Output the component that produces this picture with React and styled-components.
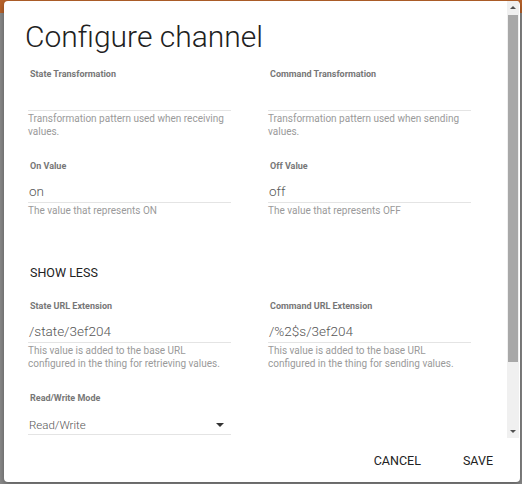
import React from 'react';
import styled, { createGlobalStyle } from 'styled-components';

const GlobalStyle = createGlobalStyle`
  html, body {
    margin: 0;
    padding: 0;
    background: #8a8a8a;
  }
  * {
    box-sizing: border-box;
  }
`;

const Backdrop = styled.div`
  width: 522px;
  height: 484px;
  padding: 1px 2px 2px 4px;
  background: linear-gradient(#b9632b 0, #b9632b 13px, #8a8a8a 13px);
  font-family: Roboto, 'Liberation Sans', sans-serif;
  overflow: hidden;
`;

const Dialog = styled.div`
  width: 516px;
  height: 481px;
  background: #fff;
  border-radius: 4px;
  box-shadow: 0 2px 6px rgba(0, 0, 0, 0.35);
  display: flex;
  flex-direction: column;
  overflow: hidden;
`;

const Body = styled.div`
  height: 437px;
  display: flex;
`;

const Content = styled.div`
  flex: 1;
  overflow: hidden;
  padding: 16px 0 0 24px;
`;

const Title = styled.h2`
  margin: 0 0 11px -3px;
  font-size: 30px;
  line-height: 39px;
  font-weight: 300;
  color: #212121;
`;

const Grid = styled.div`
  display: grid;
  grid-template-columns: 203px 203px;
  column-gap: 37px;
  row-gap: 21px;
`;

const Field = styled.div`
  display: flex;
  flex-direction: column;
`;

const Label = styled.label`
  font-size: 9px;
  line-height: 14px;
  font-weight: 700;
  color: #777;
  padding-left: 2px;
`;

const InputBox = styled.div`
  height: 30px;
  padding-top: ${({ $select }) => ($select ? '10px' : '7.5px')};
  border-bottom: 1px solid #e4e4e4;
  display: flex;
  align-items: flex-start;
  justify-content: space-between;
`;

const Value = styled.span`
  font-size: ${({ $select }) => ($select ? '11.5px' : '13.5px')};
  line-height: 20px;
  font-weight: 300;
  color: #555;
  padding-left: 1px;
`;

const Caret = styled.span`
  width: 0;
  height: 0;
  margin: 8px 7px 0 0;
  border-left: 4px solid transparent;
  border-right: 4px solid transparent;
  border-top: 4px solid #333;
`;

const Helper = styled.div`
  margin-top: 1px;
  font-size: 10px;
  line-height: 13px;
  color: #9a9a9a;
`;

const ShowLess = styled.div`
  grid-column: 1 / span 2;
  margin: 27px 0 -3px 2px;
  font-size: 12.5px;
  line-height: 16px;
  font-weight: 400;
  color: #222;
`;

const Scrollbar = styled.div`
  width: 12px;
  margin-right: 1px;
  background: #f0f0f0;
  display: flex;
  flex-direction: column;
`;

const ScrollButton = styled.div`
  height: 13px;
  display: flex;
  align-items: center;
  justify-content: center;

  &::after {
    content: '';
    border-left: 3px solid transparent;
    border-right: 3px solid transparent;
    ${({ $down }) => ($down ? 'border-top: 3px solid #505050;' : 'border-bottom: 3px solid #505050;')}
  }
`;

const Thumb = styled.div`
  height: 347px;
  margin: 1px 1px 0;
  background: #a8a8a8;
`;

const Track = styled.div`
  flex: 1;
`;

const Footer = styled.div`
  height: 44px;
  display: flex;
  align-items: center;
  justify-content: flex-end;
  gap: 10px;
  padding-right: 11px;
`;

const Button = styled.button`
  border: none;
  background: none;
  padding: 8px 16px;
  font-family: Roboto, 'Liberation Sans', sans-serif;
  font-size: 12.5px;
  font-weight: 400;
  color: #222;
`;

const fields = [
  { label: 'State Transformation', value: '', help: 'Transformation pattern used when receiving values.' },
  { label: 'Command Transformation', value: '', help: 'Transformation pattern used when sending values.' },
  { label: 'On Value', value: 'on', help: 'The value that represents ON' },
  { label: 'Off Value', value: 'off', help: 'The value that represents OFF' },
];

const extraFields = [
  { label: 'State URL Extension', value: '/state/3ef204', help: 'This value is added to the base URL configured in the thing for retrieving values.' },
  { label: 'Command URL Extension', value: '/%2$s/3ef204', help: 'This value is added to the base URL configured in the thing for sending values.' },
  { label: 'Read/Write Mode', value: 'Read/Write', select: true },
];

const renderField = (f) => (
  <Field key={f.label}>
    <Label>{f.label}</Label>
    <InputBox $select={f.select}>
      <Value $select={f.select}>{f.value}</Value>
      {f.select && <Caret />}
    </InputBox>
    {f.help && <Helper>{f.help}</Helper>}
  </Field>
);

const App = () => (
  <>
    <GlobalStyle />
    <Backdrop>
      <Dialog>
        <Body>
          <Content>
            <Title>Configure channel</Title>
            <Grid>
              {fields.map(renderField)}
              <ShowLess>SHOW LESS</ShowLess>
              {extraFields.map(renderField)}
            </Grid>
          </Content>
          <Scrollbar>
            <ScrollButton />
            <Thumb />
            <Track />
            <ScrollButton $down />
          </Scrollbar>
        </Body>
        <Footer>
          <Button>CANCEL</Button>
          <Button>SAVE</Button>
        </Footer>
      </Dialog>
    </Backdrop>
  </>
);

export default App;
